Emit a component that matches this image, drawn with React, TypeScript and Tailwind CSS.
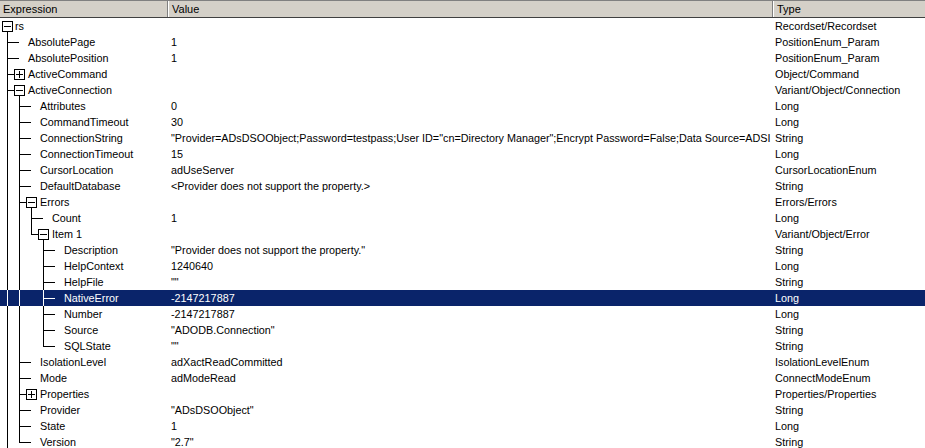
import React from 'react';

type Row = {
  name: string;
  level: number;
  value: string;
  type: string;
  box?: 'minus' | 'plus';
  selected?: boolean;
};

const rows: Row[] = [
  { name: 'rs', level: 0, value: '', type: 'Recordset/Recordset', box: 'minus' },
  { name: 'AbsolutePage', level: 1, value: '1', type: 'PositionEnum_Param' },
  { name: 'AbsolutePosition', level: 1, value: '1', type: 'PositionEnum_Param' },
  { name: 'ActiveCommand', level: 1, value: '', type: 'Object/Command', box: 'plus' },
  { name: 'ActiveConnection', level: 1, value: '', type: 'Variant/Object/Connection', box: 'minus' },
  { name: 'Attributes', level: 2, value: '0', type: 'Long' },
  { name: 'CommandTimeout', level: 2, value: '30', type: 'Long' },
  {
    name: 'ConnectionString',
    level: 2,
    value:
      '"Provider=ADsDSOObject;Password=testpass;User ID="cn=Directory Manager";Encrypt Password=False;Data Source=ADSI',
    type: 'String',
  },
  { name: 'ConnectionTimeout', level: 2, value: '15', type: 'Long' },
  { name: 'CursorLocation', level: 2, value: 'adUseServer', type: 'CursorLocationEnum' },
  { name: 'DefaultDatabase', level: 2, value: '<Provider does not support the property.>', type: 'String' },
  { name: 'Errors', level: 2, value: '', type: 'Errors/Errors', box: 'minus' },
  { name: 'Count', level: 3, value: '1', type: 'Long' },
  { name: 'Item 1', level: 3, value: '', type: 'Variant/Object/Error', box: 'minus' },
  { name: 'Description', level: 4, value: '"Provider does not support the property."', type: 'String' },
  { name: 'HelpContext', level: 4, value: '1240640', type: 'Long' },
  { name: 'HelpFile', level: 4, value: '""', type: 'String' },
  { name: 'NativeError', level: 4, value: '-2147217887', type: 'Long', selected: true },
  { name: 'Number', level: 4, value: '-2147217887', type: 'Long' },
  { name: 'Source', level: 4, value: '"ADODB.Connection"', type: 'String' },
  { name: 'SQLState', level: 4, value: '""', type: 'String' },
  { name: 'IsolationLevel', level: 2, value: 'adXactReadCommitted', type: 'IsolationLevelEnum' },
  { name: 'Mode', level: 2, value: 'adModeRead', type: 'ConnectModeEnum' },
  { name: 'Properties', level: 2, value: '', type: 'Properties/Properties', box: 'plus' },
  { name: 'Provider', level: 2, value: '"ADsDSOObject"', type: 'String' },
  { name: 'State', level: 2, value: '1', type: 'Long' },
  { name: 'Version', level: 2, value: '"2.7"', type: 'String' },
];

// does the row have a later sibling? (rs has more children past the visible list)
function hasNext(i: number): boolean {
  const lvl = rows[i].level;
  for (let j = i + 1; j < rows.length; j++) {
    if (rows[j].level < lvl) return false;
    if (rows[j].level === lvl) return true;
  }
  return lvl === 1;
}

const cx = (l: number) => 7 + 12 * l;

function TreeGuides({ index }: { index: number }) {
  const row = rows[index];
  const L = row.level;
  const color = row.selected ? '#ffffff' : '#000000';

  // walk back to find ancestors and whether each has a next sibling
  const continues: boolean[] = [];
  let want = L - 1;
  for (let j = index - 1; j >= 0 && want >= 1; j--) {
    if (rows[j].level === want) {
      continues[want] = hasNext(j);
      want--;
    }
  }

  const lines: React.ReactNode[] = [];
  for (let k = 1; k < L; k++) {
    if (continues[k]) {
      const x = cx(k - 1) + 0.5;
      lines.push(<line key={'a' + k} x1={x} y1={0} x2={x} y2={16} stroke={color} />);
    }
  }
  if (L >= 1) {
    const x = cx(L - 1) + 0.5;
    lines.push(<line key="v" x1={x} y1={0} x2={x} y2={hasNext(index) ? 16 : 8.5} stroke={color} />);
    const end = row.box ? cx(L) - 5 : cx(L);
    lines.push(<line key="h" x1={x} y1={8.5} x2={end} y2={8.5} stroke={color} />);
  }
  if (row.box) {
    const c = cx(L);
    lines.push(
      <rect key="b" x={c - 5 + 0.5} y={3.5} width={10} height={10} fill="#ffffff" stroke="#000000" />
    );
    lines.push(<line key="m" x1={c - 3} y1={8.5} x2={c + 4} y2={8.5} stroke="#000000" />);
    if (row.box === 'plus') {
      lines.push(<line key="p" x1={c + 0.5} y1={5} x2={c + 0.5} y2={12} stroke="#000000" />);
    } else {
      lines.push(<line key="d" x1={c + 0.5} y1={13.5} x2={c + 0.5} y2={16} stroke="#000000" />);
    }
  }

  const w = 15 + 12 * L + (L > 0 ? 1 : 0);
  return (
    <svg width={w} height={16} className="shrink-0" shapeRendering="crispEdges">
      {lines}
    </svg>
  );
}

export default function App() {
  return (
    <div
      className="w-[925px] h-[448px] overflow-hidden bg-white text-[10.8px] text-black"
      style={{ fontFamily: '"Liberation Sans", Arial, sans-serif' }}
    >
      {/* column headers */}
      <div className="flex h-[18px] bg-[#d4d0c8] border-t border-[#808080] border-b border-b-[#404040] text-[11px]">
        <div className="w-[168px] shrink-0 pl-[3px] leading-[16px] border-r border-[#808080]">Expression</div>
        <div className="w-[605px] shrink-0 pl-[3px] leading-[16px] border-l border-white border-r border-r-[#808080]">
          Value
        </div>
        <div className="flex-1 pl-[3px] leading-[16px] border-l border-white">Type</div>
      </div>

      {/* watch rows */}
      {rows.map((r, i) => (
        <div
          key={i}
          className={
            'flex h-[16px] leading-[17px] whitespace-nowrap ' +
            (r.selected ? 'bg-[#0a246a] text-white' : '')
          }
        >
          <div className="w-[168px] shrink-0 flex overflow-hidden">
            <TreeGuides index={i} />
            <span>{r.name}</span>
          </div>
          <div className="w-[605px] shrink-0 pl-[3px] overflow-hidden">{r.value}</div>
          <div className="flex-1 pl-[2px] overflow-hidden">{r.type}</div>
        </div>
      ))}
    </div>
  );
}
